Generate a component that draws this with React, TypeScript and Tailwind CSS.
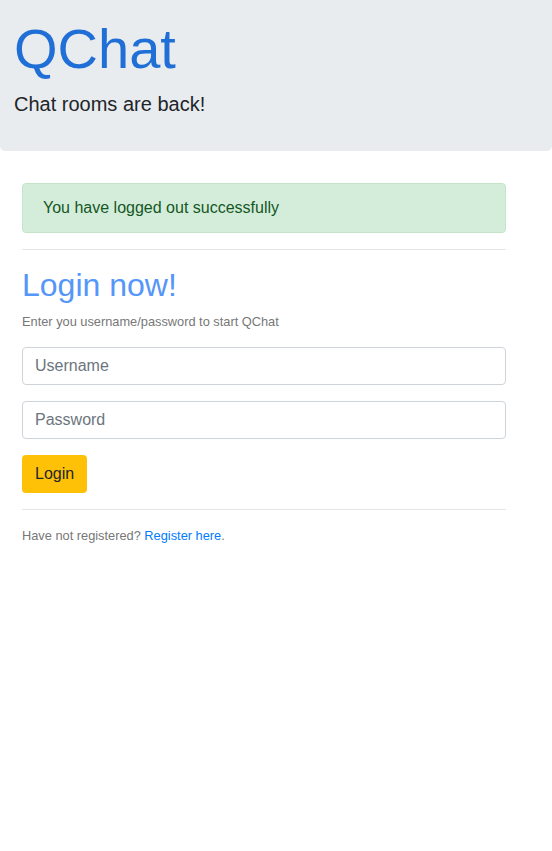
export default function App() {
  return (
    <div className="min-h-[851px] bg-white font-['Liberation_Sans',Arial,sans-serif] text-[#212529]">
      {/* Header */}
      <div className="rounded-b-[5px] bg-[#e9ecef] px-[14px] pt-[15px] pb-[32px]">
        <h1 className="text-[56px] font-normal leading-[1.2] text-[#1f6fd6]">QChat</h1>
        <p className="mt-[7px] text-[20px] leading-[1.5]">Chat rooms are back!</p>
      </div>

      <div className="ml-[22px] w-[484px] pt-[32px]">
        <div className="rounded-[4px] border border-[#c3e6cb] bg-[#d4edda] px-[20px] py-[12px] text-[16px] leading-[24px] text-[#155724]">
          You have logged out successfully
        </div>

        <hr className="my-[16px] border-t border-[rgba(0,0,0,0.1)]" />

        <h2 className="mb-[7px] text-[32px] font-normal leading-[1.2] text-[#5596f8]">Login now!</h2>
        <p className="text-[12.8px] leading-[1.5] text-[#777]">
          Enter you username/password to start QChat
        </p>

        <form className="mt-[16px] flex flex-col gap-[16px]" onSubmit={(e) => e.preventDefault()}>
          <input
            type="text"
            placeholder="Username"
            className="h-[38px] w-full rounded-[4px] border border-[#ced4da] px-[12px] text-[16px] text-[#495057] outline-none placeholder:text-[#6c757d]"
          />
          <input
            type="password"
            placeholder="Password"
            className="h-[38px] w-full rounded-[4px] border border-[#ced4da] px-[12px] text-[16px] text-[#495057] outline-none placeholder:text-[#6c757d]"
          />
          <div>
            <button
              type="submit"
              className="h-[38px] rounded-[4px] bg-[#ffc107] px-[13px] text-[16px] leading-[24px] text-[#212529]"
            >
              Login
            </button>
          </div>
        </form>

        <hr className="my-[16px] border-t border-[rgba(0,0,0,0.1)]" />

        <p className="text-[12.8px] leading-[1.5] text-[#777]">
          Have not registered?{" "}
          <a href="#" className="text-[#007bff]">
            Register here
          </a>
          .
        </p>
      </div>
    </div>
  );
}
